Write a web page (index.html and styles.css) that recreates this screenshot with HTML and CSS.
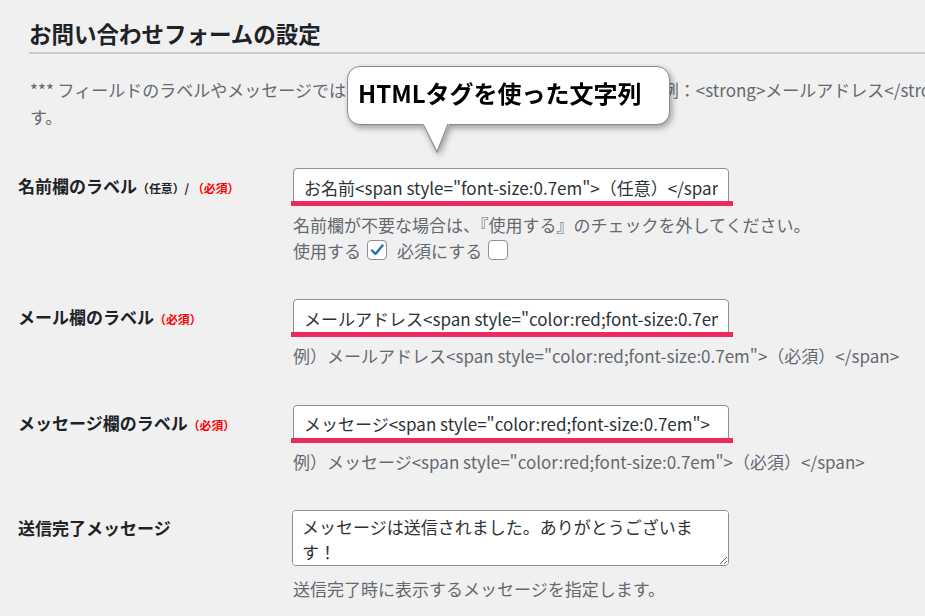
FILE: index.html
```html
<!DOCTYPE html>
<html lang="ja">
<head>
    <meta charset="UTF-8">
    <meta name="viewport" content="width=device-width, initial-scale=1.0">
    <title>お問い合わせフォームの設定</title>
    <link rel="stylesheet" href="styles.css">
</head>
<body>
    <div class="wrap">
        <h2 class="title">お問い合わせフォームの設定</h2>
        <p class="notice">*** フィールドのラベルやメッセージでは、HTMLタグを使用することができます。例：&lt;strong&gt;メールアドレス&lt;/strong&gt;のように入力すると太字で表示されま<br>す。</p>

        <div class="callout">
            HTMLタグを使った文字列
            <svg class="callout-tail" width="30" height="32" viewBox="0 0 30 32">
                <polygon points="1,0 1,2 16,30 28,2 28,0" fill="#fff"/>
                <polyline points="2,2 16,30 27,2" fill="none" stroke="#8a8a8a" stroke-width="1.2"/>
            </svg>
        </div>

        <div class="form-table">
            <div class="row">
                <div class="label">名前欄のラベル<span class="small">（任意）/ </span><span class="small req">（必須）</span></div>
                <div class="field">
                    <div class="marked">
                        <input type="text" value='お名前<span style="font-size:0.7em">（任意）</span>'>
                    </div>
                    <p class="description">名前欄が不要な場合は、『使用する』のチェックを外してください。</p>
                    <div class="checks">
                        <span>使用する</span>
                        <span class="checkbox">
                            <svg width="16" height="16" viewBox="0 0 16 16"><path d="M3 8.5 L6.5 12 L13.5 3.5" fill="none" stroke="#2271b1" stroke-width="2.4" stroke-linecap="round" stroke-linejoin="round"/></svg>
                        </span>
                        <span class="check-gap">必須にする</span>
                        <span class="checkbox"></span>
                    </div>
                </div>
            </div>

            <div class="row">
                <div class="label">メール欄のラベル<span class="small req">（必須）</span></div>
                <div class="field">
                    <div class="marked">
                        <input type="text" value='メールアドレス<span style="color:red;font-size:0.7em">（必須）</span>'>
                    </div>
                    <p class="description">例）メールアドレス&lt;span style="color:red;font-size:0.7em"&gt;（必須）&lt;/span&gt;</p>
                </div>
            </div>

            <div class="row">
                <div class="label">メッセージ欄のラベル<span class="small req">（必須）</span></div>
                <div class="field">
                    <div class="marked">
                        <input type="text" value='メッセージ<span style="color:red;font-size:0.7em">'>
                    </div>
                    <p class="description">例）メッセージ&lt;span style="color:red;font-size:0.7em"&gt;（必須）&lt;/span&gt;</p>
                </div>
            </div>

            <div class="row">
                <div class="label">送信完了メッセージ</div>
                <div class="field">
                    <textarea rows="2">メッセージは送信されました。ありがとうございます！</textarea>
                    <p class="description textarea-desc">送信完了時に表示するメッセージを指定します。</p>
                </div>
            </div>
        </div>
    </div>
</body>
</html>
```

FILE: styles.css
```css
body {
    margin: 0;
    padding: 0;
    background: #f0f0f0;
    font-family: "Noto Sans CJK JP", sans-serif;
    font-size: 17px;
    color: #1d2327;
    overflow: hidden;
}
.wrap {
    padding-left: 18px;
}
.title {
    margin: 18px 0 0 11px;
    padding-bottom: 3px;
    font-size: 22.5px;
    line-height: 31px;
    font-weight: bold;
    color: #1d2327;
    border-bottom: 2px solid #cccccc;
}
.notice {
    margin: 22px 0 0 12px;
    line-height: 27px;
    color: #646970;
    white-space: nowrap;
}
.callout {
    position: absolute;
    left: 347px;
    top: 66px;
    width: 323px;
    height: 59px;
    box-sizing: border-box;
    padding-left: 10px;
    background: #fff;
    border: 1px solid #8a8a8a;
    border-radius: 13px;
    font-size: 24px;
    font-weight: bold;
    line-height: 52px;
    color: #000;
    filter: drop-shadow(2px 3px 3px rgba(0, 0, 0, 0.35));
}
.callout-tail {
    position: absolute;
    left: 73px;
    top: 55px;
}
.form-table {
    margin-top: 20px;
}
.row {
    display: grid;
    grid-template-columns: 275px 437px;
}
.label {
    padding-top: 23px;
    line-height: 25.5px;
    font-weight: bold;
}
.small {
    font-size: 0.7em;
}
.req {
    color: #ff0000;
}
.field {
    padding: 18px 0;
}
.marked {
    position: relative;
    width: 436px;
}
.marked::after {
    content: "";
    position: absolute;
    left: -2px;
    right: -4px;
    bottom: 0;
    height: 5px;
    background: #ec2a5f;
}
.marked input {
    display: block;
    width: 100%;
    height: 38px;
    box-sizing: border-box;
    padding: 0 10px;
    border: 1px solid #8c8f94;
    border-radius: 4px;
    background: #fff;
    font-family: inherit;
    font-size: 17px;
    color: #2c3338;
}
.description {
    margin: 6px 0 0;
    line-height: 25.5px;
    color: #646970;
    white-space: nowrap;
}
.checks {
    display: flex;
    align-items: center;
    height: 25.5px;
    color: #646970;
}
.checkbox {
    display: flex;
    align-items: center;
    justify-content: center;
    width: 20px;
    height: 20px;
    box-sizing: border-box;
    margin-left: 6px;
    border: 1px solid #8c8f94;
    border-radius: 4px;
    background: #fff;
}
.check-gap {
    margin-left: 10px;
}
textarea {
    display: block;
    width: 437px;
    height: 56px;
    box-sizing: border-box;
    margin-left: -1px;
    padding: 3px 9px;
    border: 1px solid #8c8f94;
    border-radius: 4px;
    background: #fff;
    font-family: inherit;
    font-size: 17px;
    line-height: 25px;
    color: #2c3338;
    resize: vertical;
}
.textarea-desc {
    margin-top: 10px;
}
```
